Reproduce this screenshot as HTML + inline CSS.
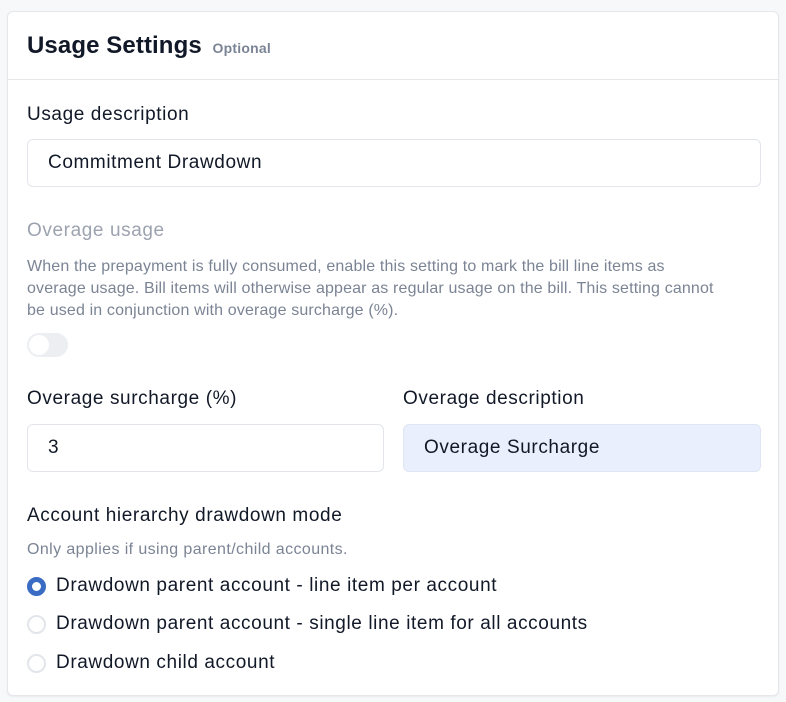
<!DOCTYPE html>
<html><head><meta charset="utf-8"><style>
*{margin:0;padding:0;box-sizing:border-box}
body{width:786px;height:702px;background:#f7f8fa;font-family:"Liberation Sans",sans-serif;color:#111827;position:relative;overflow:hidden}
.card{position:absolute;left:7px;top:11px;width:772px;height:685px;background:#fff;border:1px solid #e5e7eb;border-radius:6px;box-shadow:0 1px 2px rgba(0,0,0,.06)}
.a{position:absolute;white-space:nowrap}
.lbl{font-size:19px;letter-spacing:0.6px;color:#111827}
.inp{position:absolute;height:48px;border:1px solid #e2e5ea;border-radius:6px;font-size:19px;letter-spacing:0.6px;padding-left:20px;line-height:46px;color:#111827}
.radio{position:absolute;left:19px;width:19px;height:19px;border-radius:50%;border:2px solid #e2e5ea;background:#fff}
</style></head><body>
<div class="card">
<div class="a" style="left:19px;top:20px;font-size:24px;font-weight:bold;letter-spacing:0.1px">Usage Settings <span style="font-size:14px;color:#7b8494;font-weight:bold;margin-left:4px;letter-spacing:0.2px">Optional</span></div>
<div style="position:absolute;left:0;right:0;top:67px;border-top:1px solid #e5e7eb"></div>
<div class="a lbl" style="left:19px;top:92px">Usage description</div>
<div class="inp" style="left:19px;top:127px;width:734px">Commitment Drawdown</div>
<div class="a lbl" style="left:19px;top:208px;color:#9ca3af">Overage usage</div>
<div class="a" style="left:19px;top:244px;font-size:16px;letter-spacing:0.15px;line-height:22px;color:#7b8494">When the prepayment is fully consumed, enable this setting to mark the bill line items as<br>overage usage. Bill items will otherwise appear as regular usage on the bill. This setting cannot<br>be used in conjunction with overage surcharge (%).</div>
<div style="position:absolute;left:19px;top:321px;width:41px;height:24px;border-radius:12px;background:#eceef2"><div style="position:absolute;left:2px;top:2px;width:20px;height:20px;border-radius:50%;background:#fff"></div></div>
<div class="a lbl" style="left:19px;top:376px">Overage surcharge (%)</div>
<div class="inp" style="left:19px;top:412px;width:357px">3</div>
<div class="a lbl" style="left:395px;top:376px">Overage description</div>
<div class="inp" style="left:395px;top:412px;width:358px;background:#e9effc;border-color:#dfe5f2">Overage Surcharge</div>
<div class="a lbl" style="left:19px;top:493px">Account hierarchy drawdown mode</div>
<div class="a" style="left:19px;top:529px;font-size:16px;letter-spacing:0.4px;color:#7b8494">Only applies if using parent/child accounts.</div>
<div class="radio" style="top:565px;border:5px solid #3b6cc4"></div>
<div class="a lbl" style="left:48px;top:563px">Drawdown parent account - line item per account</div>
<div class="radio" style="top:603px"></div>
<div class="a lbl" style="left:48px;top:601px">Drawdown parent account - single line item for all accounts</div>
<div class="radio" style="top:642px"></div>
<div class="a lbl" style="left:48px;top:640px">Drawdown child account</div>
</div>
</body></html>
